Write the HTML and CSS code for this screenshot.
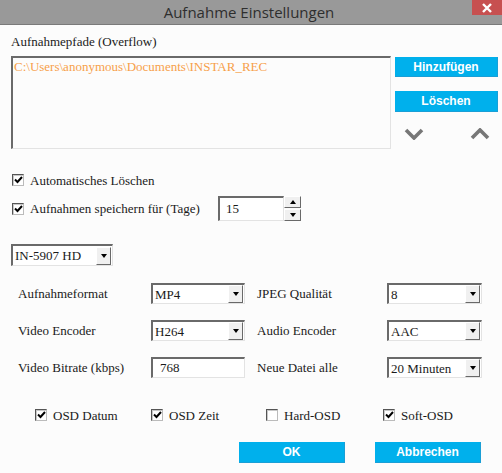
FILE: index.html
```html
<!DOCTYPE html>
<html lang="de">
<head>
<meta charset="utf-8">
<title>Aufnahme Einstellungen</title>
<link rel="stylesheet" href="styles.css">
</head>
<body>
<div class="window">
  <div class="titlebar">
    <span class="title">Aufnahme Einstellungen</span>
    <span class="close">
      <svg width="12" height="10" viewBox="0 0 12 10"><path d="M2 1 L10 9 M10 1 L2 9" stroke="#fff" stroke-width="2.4" fill="none"/></svg>
    </span>
  </div>

  <div class="main">
    <div class="paths-label">Aufnahmepfade (Overflow)</div>
    <div class="paths-row">
      <div class="paths-box sunken">C:\Users\anonymous\Documents\INSTAR_REC</div>
      <div class="paths-side">
        <div class="btn btn-add">Hinzufügen</div>
        <div class="btn btn-del">Löschen</div>
        <div class="arrows">
          <svg width="20" height="12" viewBox="0 0 20 12"><polyline points="2,2 10,10 18,2" fill="none" stroke="#777" stroke-width="3.6"/></svg>
          <svg width="20" height="12" viewBox="0 0 20 12"><polyline points="2,10 10,2 18,10" fill="none" stroke="#777" stroke-width="3.6"/></svg>
        </div>
      </div>
    </div>

    <div class="check-row row-auto">
      <span class="cb checked"><svg width="9" height="8" viewBox="0 0 9 8"><path d="M1 3.5 L3.5 6 L8 1" fill="none" stroke="#000" stroke-width="2"/></svg></span>
      <span class="cb-label">Automatisches Löschen</span>
    </div>
    <div class="check-row row-days">
      <span class="cb checked"><svg width="9" height="8" viewBox="0 0 9 8"><path d="M1 3.5 L3.5 6 L8 1" fill="none" stroke="#000" stroke-width="2"/></svg></span>
      <span class="cb-label days-label">Aufnahmen speichern für (Tage)</span>
      <div class="spin">
        <div class="spin-input sunken">15</div>
        <div class="spin-btns">
          <span class="spin-btn"><span class="tri-up"></span></span>
          <span class="spin-btn"><span class="tri-down"></span></span>
        </div>
      </div>
    </div>

    <div class="select sunken model-select"><span class="sel-text">IN-5907 HD</span><span class="sel-btn"><span class="tri-down"></span></span></div>

    <div class="settings">
      <div class="lbl">Aufnahmeformat</div>
      <div class="select sunken"><span class="sel-text">MP4</span><span class="sel-btn"><span class="tri-down"></span></span></div>
      <div class="lbl lbl2">JPEG Qualität</div>
      <div class="select sunken"><span class="sel-text">8</span><span class="sel-btn"><span class="tri-down"></span></span></div>

      <div class="lbl">Video Encoder</div>
      <div class="select sunken"><span class="sel-text">H264</span><span class="sel-btn"><span class="tri-down"></span></span></div>
      <div class="lbl lbl2">Audio Encoder</div>
      <div class="select sunken"><span class="sel-text">AAC</span><span class="sel-btn"><span class="tri-down"></span></span></div>

      <div class="lbl">Video Bitrate (kbps)</div>
      <div class="input sunken">768</div>
      <div class="lbl lbl2">Neue Datei alle</div>
      <div class="select sunken"><span class="sel-text">20 Minuten</span><span class="sel-btn"><span class="tri-down"></span></span></div>
    </div>

    <div class="osd-row">
      <div class="osd-item">
        <span class="cb checked"><svg width="9" height="8" viewBox="0 0 9 8"><path d="M1 3.5 L3.5 6 L8 1" fill="none" stroke="#000" stroke-width="2"/></svg></span>
        <span class="cb-label">OSD Datum</span>
      </div>
      <div class="osd-item">
        <span class="cb checked"><svg width="9" height="8" viewBox="0 0 9 8"><path d="M1 3.5 L3.5 6 L8 1" fill="none" stroke="#000" stroke-width="2"/></svg></span>
        <span class="cb-label">OSD Zeit</span>
      </div>
      <div class="osd-item">
        <span class="cb"></span>
        <span class="cb-label">Hard-OSD</span>
      </div>
      <div class="osd-item">
        <span class="cb checked"><svg width="9" height="8" viewBox="0 0 9 8"><path d="M1 3.5 L3.5 6 L8 1" fill="none" stroke="#000" stroke-width="2"/></svg></span>
        <span class="cb-label">Soft-OSD</span>
      </div>
    </div>

    <div class="actions">
      <div class="btn btn-action">OK</div>
      <div class="btn btn-action">Abbrechen</div>
    </div>
  </div>
</div>
</body>
</html>
```
FILE: styles.css
```css
html, body {
  margin: 0;
  padding: 0;
}
body {
  width: 502px;
  height: 473px;
  overflow: hidden;
  background: #fcfcfc;
  font-family: "Liberation Serif", "Times New Roman", serif;
  font-size: 13px;
  color: #1a1a1a;
}
.window {
  display: flex;
  flex-direction: column;
}
.titlebar {
  position: relative;
  height: 24px;
  background: #999999;
  border-bottom: 1px solid #7a7a7a;
  display: flex;
  align-items: center;
  justify-content: center;
}
.title {
  font-family: "Open Sans", "Noto Sans", sans-serif;
  font-size: 15px;
  color: #2e2e2e;
  line-height: 24px;
  margin-right: 4px;
}
.close {
  position: absolute;
  top: 0;
  right: 0;
  width: 30px;
  height: 15px;
  background: #c75050;
  display: flex;
  align-items: center;
  justify-content: center;
}
.main {
  display: flex;
  flex-direction: column;
  padding-left: 11px;
}
.paths-label {
  margin-top: 9px;
  line-height: 15px;
}
.paths-row {
  margin-top: 7px;
  display: flex;
}
.sunken {
  box-sizing: border-box;
  background: #fff;
  border-style: solid;
  border-width: 2px 1px 1px 2px;
  border-color: #6a6a6a #e3e3e3 #e3e3e3 #6a6a6a;
}
.paths-box {
  width: 380px;
  height: 93px;
  padding: 1px 0 0 1px;
  line-height: 15px;
  color: #f7a04a;
  background: #fcfcfc;
}
.paths-side {
  margin-left: 4px;
  width: 103px;
  display: flex;
  flex-direction: column;
}
.btn {
  box-sizing: border-box;
  background: #00b0ec;
  border-bottom: 1px solid #1a9fd6;
  border-right: 1px solid #1a9fd6;
  color: #fff;
  font-family: "Liberation Sans", Arial, sans-serif;
  font-weight: bold;
  font-size: 12px;
  display: flex;
  align-items: center;
  justify-content: center;
}
.btn-add {
  margin-top: 1px;
  height: 20px;
}
.btn-del {
  margin-top: 14px;
  height: 21px;
}
.arrows {
  margin-top: 16px;
  display: flex;
  justify-content: space-between;
  padding: 0 8px 0 9px;
}
.check-row {
  display: flex;
  align-items: center;
  padding-left: 1px;
}
.row-auto {
  margin-top: 21px;
  height: 20px;
}
.row-days {
  margin-top: 6px;
  height: 25px;
}
.cb {
  box-sizing: border-box;
  width: 12px;
  height: 12px;
  background: #fff;
  border-style: solid;
  border-width: 1px;
  border-color: #555 #bbb #bbb #555;
  box-shadow: inset 1px 1px 0 #c8c8c8;
  display: flex;
  align-items: center;
  justify-content: center;
}
.cb-label {
  margin-left: 6px;
  line-height: 15px;
}
.days-label {
  width: 188px;
}
.spin {
  display: flex;
  height: 25px;
}
.spin-input {
  width: 66px;
  height: 25px;
  padding: 3px 0 0 6px;
  line-height: 15px;
}
.spin-btns {
  display: flex;
  flex-direction: column;
  width: 17px;
  gap: 1px;
}
.spin-btn {
  box-sizing: border-box;
  height: 12px;
  background: #f0f0f0;
  border-style: solid;
  border-width: 1px;
  border-color: #fff #696969 #696969 #fff;
  display: flex;
  align-items: center;
  justify-content: center;
}
.tri-up {
  width: 0;
  height: 0;
  border-left: 3.5px solid transparent;
  border-right: 3.5px solid transparent;
  border-bottom: 4px solid #000;
}
.tri-down {
  width: 0;
  height: 0;
  border-left: 3.5px solid transparent;
  border-right: 3.5px solid transparent;
  border-top: 4px solid #000;
}
.select {
  display: flex;
  align-items: center;
  height: 21px;
  padding: 0 1px 0 2px;
}
.sel-text {
  flex: 1;
  line-height: 15px;
}
.sel-btn {
  box-sizing: border-box;
  width: 15px;
  height: 18px;
  background: #f0f0f0;
  border-style: solid;
  border-width: 1px;
  border-color: #fff #696969 #696969 #fff;
  display: flex;
  align-items: center;
  justify-content: center;
}
.model-select {
  margin-top: 23px;
  width: 102px;
  height: 22px;
}
.settings {
  margin-top: 17px;
  margin-left: 7px;
  display: grid;
  grid-template-columns: 133px 94px 142px 95px;
  grid-auto-rows: 21px;
  row-gap: 16px;
  align-items: center;
}
.lbl {
  line-height: 15px;
}
.lbl2 {
  padding-left: 12px;
}
.input {
  height: 21px;
  padding: 1px 0 0 7px;
  line-height: 15px;
}
.osd-row {
  margin-top: 27px;
  margin-left: 24px;
  height: 20px;
  display: grid;
  grid-template-columns: 116px 115px 117px 100px;
  align-items: center;
}
.osd-item {
  display: flex;
  align-items: center;
}
.actions {
  margin-top: 17px;
  display: flex;
  justify-content: flex-end;
  gap: 30px;
  padding-right: 21px;
}
.btn-action {
  width: 106px;
  height: 21px;
}
```
